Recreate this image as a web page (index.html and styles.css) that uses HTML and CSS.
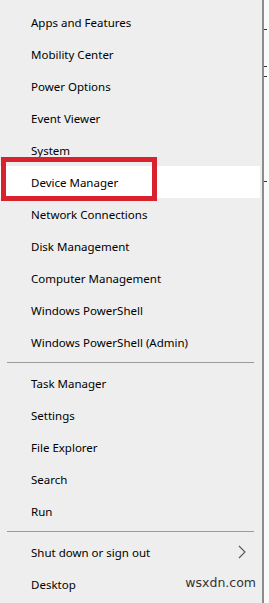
FILE: index.html
```html
<!DOCTYPE html>
<html lang="en">
<head>
    <meta charset="UTF-8">
    <meta name="viewport" content="width=device-width, initial-scale=1.0">
    <title>Quick Link Menu</title>
    <link rel="stylesheet" href="styles.css">
</head>
<body>
    <div class="screen">
        <div class="menu">
            <div class="item">Apps and Features</div>
            <div class="item">Mobility Center</div>
            <div class="item">Power Options</div>
            <div class="item">Event Viewer</div>
            <div class="item">System</div>
            <div class="item active">Device Manager</div>
            <div class="item">Network Connections</div>
            <div class="item">Disk Management</div>
            <div class="item">Computer Management</div>
            <div class="item">Windows PowerShell</div>
            <div class="item">Windows PowerShell (Admin)</div>
            <div class="sep"></div>
            <div class="item">Task Manager</div>
            <div class="item">Settings</div>
            <div class="item">File Explorer</div>
            <div class="item">Search</div>
            <div class="item">Run</div>
            <div class="sep"></div>
            <div class="item has-sub">
                Shut down or sign out
                <svg class="chevron" width="8" height="14" viewBox="0 0 8 14">
                    <path d="M1 1 L7 7 L1 13" fill="none" stroke="#555" stroke-width="1.1"/>
                </svg>
            </div>
            <div class="item">Desktop</div>

            <div class="highlight"></div>
            <div class="watermark">wsxdn.com</div>
        </div>
        <div class="behind">
            <div class="tick t1"></div>
            <div class="tick t2"></div>
            <div class="tick t3"></div>
            <div class="tick t4"></div>
        </div>
    </div>
</body>
</html>
```

FILE: styles.css
```css
body {
    margin: 0;
    padding: 0;
    background: #f4f4f4;
    font-family: "Segoe UI", "Noto Sans", sans-serif;
}

.screen {
    display: flex;
    width: 269px;
    height: 603px;
    overflow: hidden;
}

.menu {
    position: relative;
    width: 264px;
    flex-shrink: 0;
    background: #eeeeee;
    border-right: 2px solid #8c8c8c;
    padding-top: 6px;
    box-sizing: border-box;
}

.item {
    height: 32px;
    display: flex;
    align-items: center;
    padding-left: 31px;
    font-size: 11.5px;
    color: #000;
    margin-right: 2px;
}

.item.active {
    background: #ffffff;
}

.has-sub {
    justify-content: space-between;
    padding-right: 14px;
}

.chevron {
    display: block;
}

.sep {
    height: 1px;
    background: #9a9a9a;
    margin: 4px 8px 4px 7px;
}

.highlight {
    position: absolute;
    left: 1px;
    top: 157px;
    width: 156px;
    height: 44px;
    border: 5px solid #d8222e;
    box-sizing: border-box;
}

.watermark {
    position: absolute;
    right: 6px;
    top: 575px;
    font-family: "DejaVu Sans", sans-serif;
    font-size: 12.5px;
    color: #333;
}

.behind {
    position: relative;
    flex: 1;
    background: #fafafa;
}

.tick {
    position: absolute;
    left: 0;
    width: 3px;
    height: 1px;
    background: #333;
}

.t1 { top: 29px; }
.t2 { top: 66px; }
.t3 { top: 76px; }
.t4 { top: 181px; }
```
